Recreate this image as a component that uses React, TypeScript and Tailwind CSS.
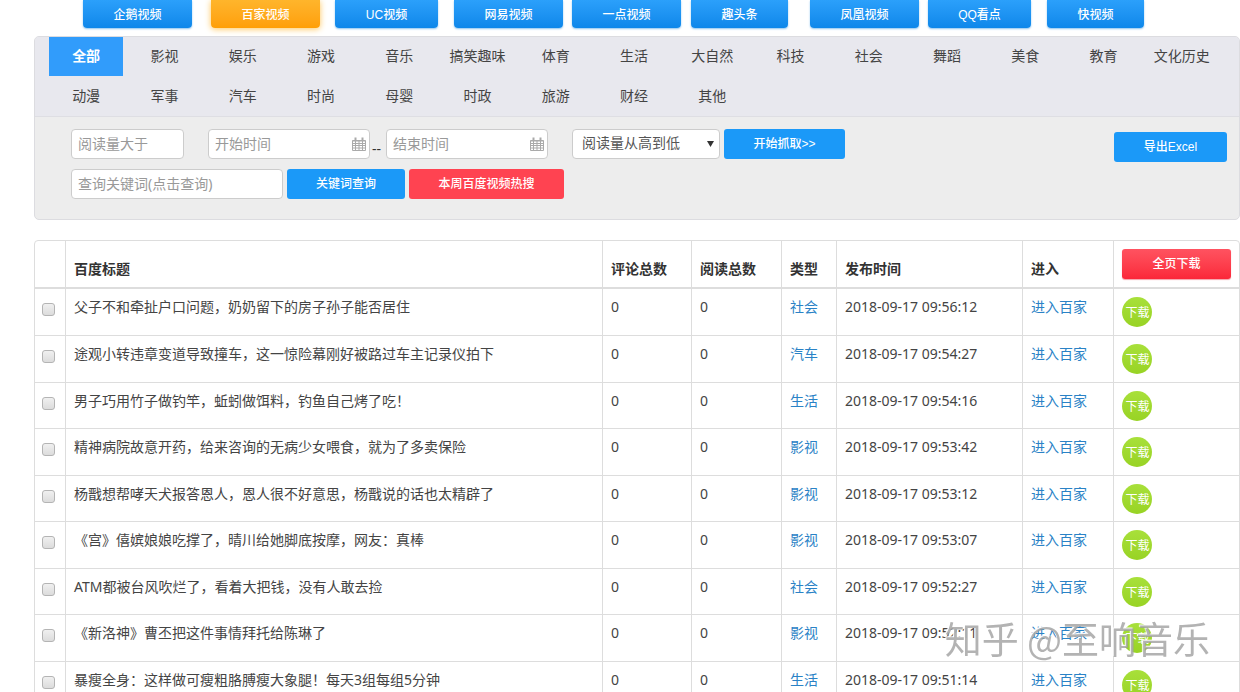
import clsx from 'clsx'

interface IVideo {
  title: string
  category: string
  publishedAt: string
}

const platforms = [
  { name: '企鹅视频', width: 'w-[109px]' },
  { name: '百家视频', width: 'w-[109px]' },
  { name: 'UC视频', width: 'w-[103px]' },
  { name: '网易视频', width: 'w-[109px]' },
  { name: '一点视频', width: 'w-[109px]' },
  { name: '趣头条', width: 'w-[97px]' },
  { name: '凤凰视频', width: 'w-[109px]' },
  { name: 'QQ看点', width: 'w-[103px]' },
  { name: '快视频', width: 'w-[97px]' },
]

const categories = [
  '全部', '影视', '娱乐', '游戏', '音乐', '搞笑趣味', '体育', '生活',
  '大自然', '科技', '社会', '舞蹈', '美食', '教育', '文化历史', '动漫',
  '军事', '汽车', '时尚', '母婴', '时政', '旅游', '财经', '其他',
]

const videos: IVideo[] = [
  { title: '父子不和牵扯户口问题，奶奶留下的房子孙子能否居住', category: '社会', publishedAt: '2018-09-17 09:56:12' },
  { title: '途观小转违章变道导致撞车，这一惊险幕刚好被路过车主记录仪拍下', category: '汽车', publishedAt: '2018-09-17 09:54:27' },
  { title: '男子巧用竹子做钓竿，蚯蚓做饵料，钓鱼自己烤了吃！', category: '生活', publishedAt: '2018-09-17 09:54:16' },
  { title: '精神病院故意开药，给来咨询的无病少女喂食，就为了多卖保险', category: '影视', publishedAt: '2018-09-17 09:53:42' },
  { title: '杨戬想帮哮天犬报答恩人，恩人很不好意思，杨戬说的话也太精辟了', category: '影视', publishedAt: '2018-09-17 09:53:12' },
  { title: '《宫》僖嫔娘娘吃撑了，晴川给她脚底按摩，网友：真棒', category: '影视', publishedAt: '2018-09-17 09:53:07' },
  { title: 'ATM都被台风吹烂了，看着大把钱，没有人敢去捡', category: '社会', publishedAt: '2018-09-17 09:52:27' },
  { title: '《新洛神》曹丕把这件事情拜托给陈琳了', category: '影视', publishedAt: '2018-09-17 09:52:11' },
  { title: '暴瘦全身：这样做可瘦粗胳膊瘦大象腿！每天3组每组5分钟', category: '生活', publishedAt: '2018-09-17 09:51:14' },
]

const inputClass =
  'h-[30px] rounded-[4px] border border-[#ccc] bg-white px-1.5 pb-0.5 text-[14px] leading-5 text-[#555] placeholder:text-[#999] outline-none'

const buttonClass =
  "h-[30px] rounded-[3px] text-center font-['Liberation_Sans','Noto_Sans_CJK_SC',sans-serif] text-[12px] font-medium leading-[30px] text-white"

function CalendarIcon() {
  return (
    <svg className="pointer-events-none absolute right-1 top-2 h-3.5 w-3.5" viewBox="0 0 14 14" fill="none" stroke="#aaa">
      <path d="M.5 3.5h13v10H.5zM.5 6.5h13M.5 8.5h13M.5 11h13M3.5 4v9M7 4v9M10.5 4v9" />
      <path d="M3.5 .5v3M10.5 .5v3" strokeWidth="2" />
      <path d="M.5 4h13" />
    </svg>
  )
}

function DateInput({ label }: { label: string }) {
  return (
    <div className="relative w-[162px]">
      <input type="text" aria-label={label} placeholder={label} className={clsx(inputClass, 'w-full')} />
      <CalendarIcon />
    </div>
  )
}

function PlatformNav() {
  return (
    <nav className="grid grid-cols-[128fr_124fr_119fr_118fr_119fr_119fr_118fr_119fr_98fr] pl-[83px] pr-[95px]">
      {platforms.map((item, index) => (
        <button
          key={item.name}
          type="button"
          className={clsx(
            "h-7 rounded-b-[4px] bg-linear-to-b pt-0.5 font-['Liberation_Sans','Noto_Sans_CJK_SC',sans-serif] text-[12px] font-medium leading-5 text-white",
            item.width,
            index === 1
              ? 'from-[#ffb52b] to-[#ff9f05] shadow-[0_1px_6px_#ffc65a]'
              : 'from-[#2ba0fb] to-[#0d87ea] shadow-[0_1px_2px_#8cc4f0]'
          )}
        >
          {item.name}
        </button>
      ))}
    </nav>
  )
}

function CategoryBar() {
  return (
    <div className="grid auto-rows-[39px] grid-cols-[repeat(15,minmax(0,1fr))] gap-x-1 gap-y-px border-b border-[#dedee3] bg-[#e8e8ee] pl-3.5 pr-5">
      {categories.map((name, index) => (
        <button
          key={name}
          type="button"
          className={clsx(
            'whitespace-nowrap pb-0.5 text-[14px] leading-5',
            index === 0 ? 'bg-[#319cfb] font-bold text-white' : 'text-[#444]'
          )}
        >
          {name}
        </button>
      ))}
    </div>
  )
}

function Filters() {
  return (
    <form className="flex items-start justify-between pb-5 pl-9 pr-3 pt-3" onSubmit={(e) => e.preventDefault()}>
      <div className="flex flex-col gap-2.5">
        <div className="flex items-center">
          <input type="text" aria-label="阅读量大于" placeholder="阅读量大于" className={clsx(inputClass, 'mr-6 w-[113px]')} />
          <DateInput label="开始时间" />
          <span className="w-4 self-end pl-0.5 text-[14px] leading-5 text-[#333]">--</span>
          <DateInput label="结束时间" />
          <div className="relative ml-6 mr-1 w-[148px]">
            <select aria-label="排序" className={clsx(inputClass, 'w-full appearance-none pl-[9px]')}>
              <option>阅读量从高到低</option>
              <option>阅读量从低到高</option>
            </select>
            <svg className="pointer-events-none absolute right-1.5 top-3 h-1.5 w-[7px]" viewBox="0 0 7 6" fill="#333">
              <path d="M0 0h7L3.5 6z" />
            </svg>
          </div>
          <button type="submit" className={clsx(buttonClass, 'w-[121px] bg-[#1b99f8]')}>
            开始抓取&gt;&gt;
          </button>
        </div>
        <div className="flex gap-1">
          <input
            type="text"
            aria-label="查询关键词"
            placeholder="查询关键词(点击查询)"
            className={clsx(inputClass, 'w-[212px]')}
          />
          <button type="button" className={clsx(buttonClass, 'w-[118px] bg-[#1b99f8]')}>
            关键词查询
          </button>
          <button type="button" className={clsx(buttonClass, 'w-[155px] bg-[#ff4351]')}>
            本周百度视频热搜
          </button>
        </div>
      </div>
      <button type="button" className={clsx(buttonClass, 'mt-[3px] w-[113px] bg-[#1b99f8]')}>
        导出Excel
      </button>
    </form>
  )
}

function VideoTable() {
  const th = 'border-b-2 border-l border-[#ddd] px-2 pb-2 pt-2 align-bottom font-bold text-[#333]'
  const td = 'border-l border-[#ddd] pb-[7px] pt-2 align-top group-not-first:border-t'
  return (
    <div className="rounded-[4px] border border-[#ddd]">
      <table className="w-full table-fixed border-separate border-spacing-0 text-left text-[14px] leading-5 text-[#444]">
        <colgroup>
          <col className="w-[30px]" />
          <col />
          <col className="w-[89px]" />
          <col className="w-[90px]" />
          <col className="w-[55px]" />
          <col className="w-[186px]" />
          <col className="w-[91px]" />
          <col className="w-[126px]" />
        </colgroup>
        <thead>
          <tr>
            <th className={clsx(th, 'border-l-0')} />
            <th className={th}>百度标题</th>
            <th className={th}>评论总数</th>
            <th className={th}>阅读总数</th>
            <th className={th}>类型</th>
            <th className={th}>发布时间</th>
            <th className={th}>进入</th>
            <th className={th}>
              <button
                type="button"
                className={clsx(buttonClass, 'block w-[109px] bg-linear-to-b from-[#ff5260] to-[#fb2639] shadow-[0_1px_1px_#f5a0a8]')}
              >
                全页下载
              </button>
            </th>
          </tr>
        </thead>
        <tbody>
          {videos.map((video) => (
            <tr key={video.title} className="group h-[46px] even:h-[47px]">
              <td className={clsx(td, 'border-l-0 px-[7px]')}>
                <input
                  type="checkbox"
                  aria-label={video.title}
                  className="mt-1.5 block h-[13px] w-[13px] appearance-none rounded-[3px] border border-[#b4b4b4] bg-linear-to-b from-[#f0f0f0] to-[#dcdcdc]"
                />
              </td>
              <td className={clsx(td, 'truncate px-2')}>{video.title}</td>
              <td className={clsx(td, 'px-2')}>0</td>
              <td className={clsx(td, 'px-2')}>0</td>
              <td className={clsx(td, 'px-2')}>
                <a href="#" className="text-[#2a82c6]">{video.category}</a>
              </td>
              <td className={clsx(td, 'whitespace-nowrap px-2')}>{video.publishedAt}</td>
              <td className={clsx(td, 'px-2')}>
                <a href="#" className="text-[#2a82c6]">进入百家</a>
              </td>
              <td className={clsx(td, 'px-2')}>
                <button
                  type="button"
                  className="block h-[30px] w-[30px] whitespace-nowrap rounded-full bg-linear-to-b from-[#a8e03a] to-[#98d324] pl-px pt-0.5 text-[12px] leading-5 text-white"
                >
                  下载
                </button>
              </td>
            </tr>
          ))}
        </tbody>
      </table>
    </div>
  )
}

export default function App() {
  return (
    <div className="h-screen overflow-hidden bg-white font-['Noto_Sans','Noto_Sans_CJK_SC',sans-serif]">
      <PlatformNav />
      <main className="flex flex-col gap-5 pl-[34px] pt-2">
        <section className="overflow-hidden rounded-[5px] border border-[#dcdce0] bg-[#ededed]">
          <CategoryBar />
          <Filters />
        </section>
        <VideoTable />
      </main>
      <div className="pointer-events-none fixed bottom-7 right-[30px] whitespace-nowrap font-['Noto_Sans_CJK_SC',sans-serif] text-[37px] leading-[52px] text-[#999]/75 [text-shadow:-1px_-1px_1px_#fff]">
        知乎 @至响音乐
      </div>
    </div>
  )
}
